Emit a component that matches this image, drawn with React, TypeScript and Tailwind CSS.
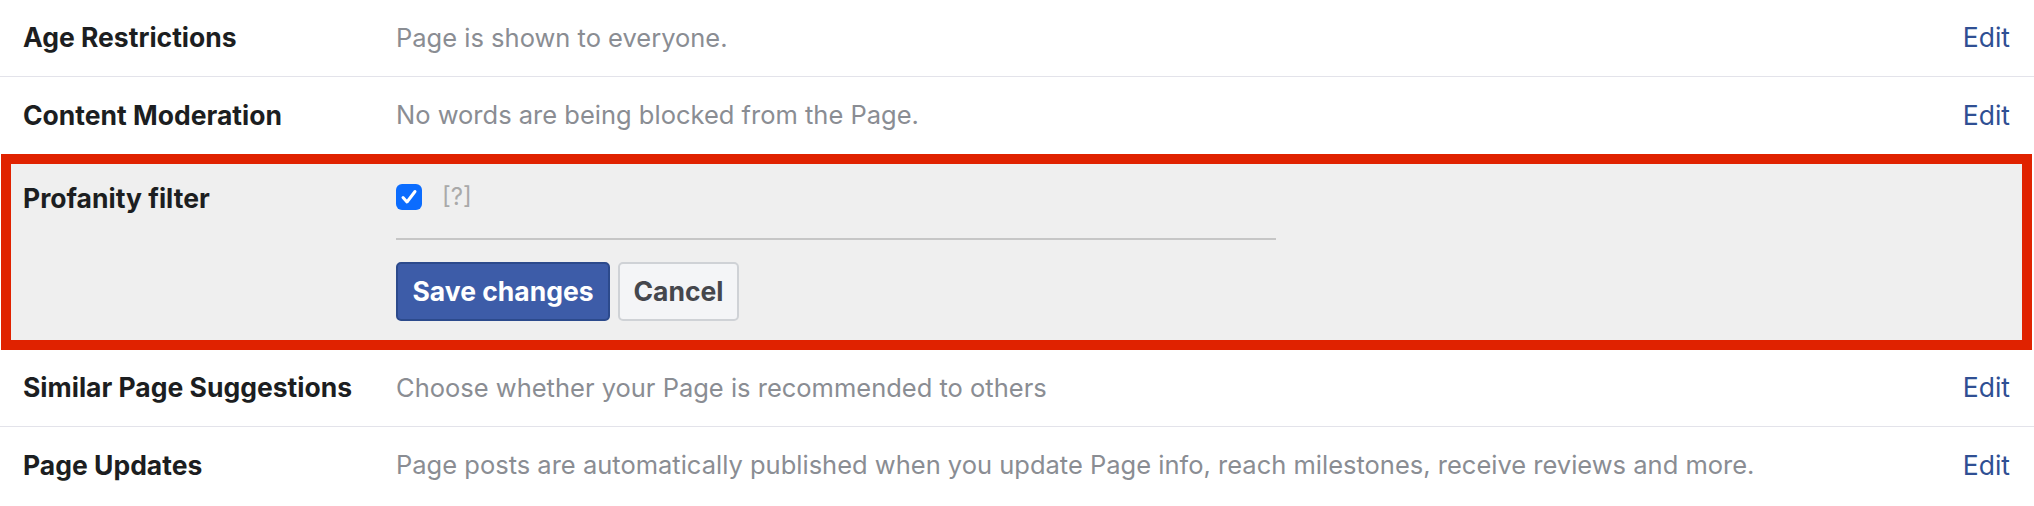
const rows = [
  { label: "Age Restrictions", text: "Page is shown to everyone." },
  { label: "Content Moderation", text: "No words are being blocked from the Page." },
];

const rowsAfter = [
  { label: "Similar Page Suggestions", text: "Choose whether your Page is recommended to others" },
  {
    label: "Page Updates",
    text: "Page posts are automatically published when you update Page info, reach milestones, receive reviews and more.",
  },
];

function Row({ label, text, divider }: { label: string; text: string; divider?: boolean }) {
  return (
    <div className={`flex h-[77px] items-center pl-[23px] pr-[24px] ${divider ? "border-b border-[#e3e3ea]" : ""}`}>
      <div className="w-[373px] shrink-0 text-[26.5px] font-bold text-[#1c1e21]">{label}</div>
      <div className="flex-1 text-[25.5px] text-[#8a8d93]">{text}</div>
      <a className="text-[26.5px] text-[#2f4f93]">Edit</a>
    </div>
  );
}

export default function App() {
  return (
    <main className="min-h-screen w-[2034px] bg-white font-['Inter',sans-serif]">
      <Row {...rows[0]} divider />
      <Row {...rows[1]} />

      {/* profanity filter, open for editing */}
      <section className="ml-px mr-[2px] border-[10px] border-[#e02200] bg-[#efefef] pb-[19px] pl-[12px] pt-[19px]">
        <div className="flex">
          <div className="w-[373px] shrink-0 pt-[1px] text-[26.5px] font-bold leading-[28px] text-[#1c1e21]">
            Profanity filter
          </div>
          <div className="flex flex-col">
            <div className="flex h-[28px] items-center gap-[20px]">
              <span className="flex h-[26px] w-[26px] items-center justify-center rounded-[6px] bg-[#0b6cfe]">
                <svg width="18" height="18" viewBox="0 0 18 18">
                  <path d="M3 9.5 L7 14 L15 3.5" fill="none" stroke="white" strokeWidth="3" strokeLinecap="round" strokeLinejoin="round" />
                </svg>
              </span>
              <span className="text-[24px] text-[#a9a9a9]">[?]</span>
            </div>
            <div className="mt-[27px] h-[2px] w-[880px] bg-[#c6c6c6]" />
            <div className="mt-[22px] flex gap-[8px]">
              <button className="h-[59px] w-[214px] rounded-[5px] border-2 border-[#2c4a8c] bg-[#3d5ca8] text-[26.5px] font-bold text-white">
                Save changes
              </button>
              <button className="h-[59px] w-[121px] rounded-[5px] border-2 border-[#cfd2d6] bg-[#f4f5f7] text-[26.5px] font-bold text-[#45474d]">
                Cancel
              </button>
            </div>
          </div>
        </div>
      </section>

      <Row {...rowsAfter[0]} divider />
      <Row {...rowsAfter[1]} />
    </main>
  );
}
